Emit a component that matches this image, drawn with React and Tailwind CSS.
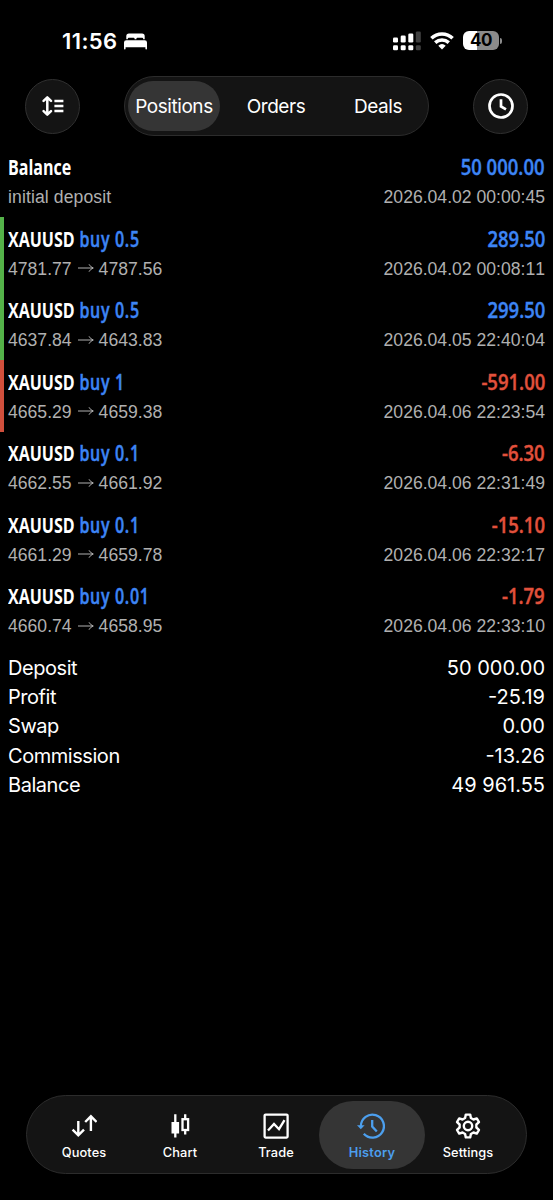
import React from 'react';

const transactions = [
  { id: 1, title: 'Balance', note: 'initial deposit', amount: '50 000.00', time: '2026.04.02 00:00:45' },
  { id: 2, title: 'XAUUSD', side: 'buy 0.5', from: '4781.77', to: '4787.56', amount: '289.50', time: '2026.04.02 00:08:11', bar: 'bg-[#54b249]' },
  { id: 3, title: 'XAUUSD', side: 'buy 0.5', from: '4637.84', to: '4643.83', amount: '299.50', time: '2026.04.05 22:40:04', bar: 'bg-[#54b249]' },
  { id: 4, title: 'XAUUSD', side: 'buy 1', from: '4665.29', to: '4659.38', amount: '-591.00', time: '2026.04.06 22:23:54', bar: 'bg-[#d04f3c]' },
  { id: 5, title: 'XAUUSD', side: 'buy 0.1', from: '4662.55', to: '4661.92', amount: '-6.30', time: '2026.04.06 22:31:49' },
  { id: 6, title: 'XAUUSD', side: 'buy 0.1', from: '4661.29', to: '4659.78', amount: '-15.10', time: '2026.04.06 22:32:17' },
  { id: 7, title: 'XAUUSD', side: 'buy 0.01', from: '4660.74', to: '4658.95', amount: '-1.79', time: '2026.04.06 22:33:10' },
];

const summary = [
  { label: 'Deposit', value: '50 000.00' },
  { label: 'Profit', value: '-25.19' },
  { label: 'Swap', value: '0.00' },
  { label: 'Commission', value: '-13.26' },
  { label: 'Balance', value: '49 961.55' },
];

const BedIcon = () => (
  <svg className="h-[17px] w-[23px]" viewBox="0 0 23 17" fill="currentColor">
    <path d="M2.3 6.2V3.2Q2.3 .5 5 .5h13q2.700 0 2.700 2.700v3h-1.500V5.800q0-1-1-1h-4.800q-1 0-1 1v.4h-1.800v-.4q0-1-1-1H4.800q-1 0-1 1v.4z" />
    <path d="M0 9.500Q0 7.200 2.300 7.200h18.400q2.300 0 2.300 2.300V15.600q0 .9-.8.900t-.8-.9V14.200H1.600v1.400q0 .9-.8.900T0 15.600z" />
  </svg>
);

const SignalIcon = () => (
  <svg className="h-[20px] w-[28px]" viewBox="0 0 28 20" fill="currentColor">
    <rect x="0" y="6.500" width="5" height="5" rx="1.300" />
    <rect x="7.700" y="4.500" width="5" height="7" rx="1.300" />
    <rect x="15.300" y="2.500" width="5" height="9" rx="1.300" />
    <rect x="22.800" y=".5" width="5" height="11" rx="1.300" opacity=".25" />
    <rect x="0" y="14.300" width="5" height="5" rx="1.300" />
    <rect x="7.700" y="14.300" width="5" height="5" rx="1.300" />
    <rect x="15.300" y="14.300" width="5" height="5" rx="1.300" />
    <rect x="22.800" y="14.300" width="5" height="5" rx="1.300" opacity=".25" />
  </svg>
);

const WifiIcon = () => (
  <svg className="h-[18px] w-[24px]" viewBox="0 0 24 18" fill="none" stroke="currentColor" strokeWidth="3.500">
    <path d="M1.400 6.300Q5.800 1.900 12 1.900T22.600 6.300" />
    <path d="M5.200 10.600Q8.200 7.900 12 7.900t6.800 2.700" />
    <path d="M8.300 13.700Q10 12.100 12 12.100t3.700 1.600L12 17.500z" fill="currentColor" stroke="none" />
  </svg>
);

const SortIcon = () => (
  <svg className="h-[20px] w-[22px]" viewBox="0 0 22 20" fill="none" stroke="currentColor" strokeWidth="2.500" strokeLinecap="round" strokeLinejoin="round">
    <path d="M5.300 2v16M1.600 4.900l3.700-3.500L9 4.900M1.600 15.100l3.700 3.500L9 15.100" />
    <path d="M12.400 4.900h9M12.400 10h9M12.400 15.100h9" strokeLinecap="butt" />
  </svg>
);

const ClockIcon = () => (
  <svg className="h-[26px] w-[26px]" viewBox="0 0 26 26" fill="none" stroke="currentColor" strokeWidth="2.700">
    <circle cx="13" cy="13" r="11.500" />
    <path d="M13 6.200V13.400L18 16.300" />
  </svg>
);

const QuotesIcon = () => (
  <svg className="h-[26px] w-[26px]" viewBox="0 0 26 26" fill="none" stroke="currentColor" strokeWidth="2.400">
    <path d="M7.300 8v14.500M1.600 16.700l5.700 5.700 5.700-5.700" />
    <path d="M19.900 18V3M14.200 9l5.700-5.700L25.600 9" />
  </svg>
);

const ChartIcon = () => (
  <svg className="h-[26px] w-[26px]" viewBox="0 0 26 26" fill="none" stroke="currentColor" strokeWidth="2.300">
    <path d="M8.300 1.200v23.200M18.200 1.200V6M18.200 17v4.500" />
    <rect x="4.500" y="9" width="7.600" height="11.500" fill="currentColor" stroke="none" />
    <rect x="15.500" y="6.200" width="5.600" height="10.800" />
  </svg>
);

const TradeIcon = () => (
  <svg className="h-[26px] w-[26px]" viewBox="0 0 26 26" fill="none" stroke="currentColor" strokeWidth="2.300">
    <rect x="1.600" y="1.600" width="23" height="23" rx="1" />
    <path d="M5 17.500l6-6.500 5 5.200 5.500-9" />
  </svg>
);

const HistoryIcon = () => (
  <svg className="ml-[-2px] h-[26px] w-[28px]" viewBox="0 0 28 26" fill="none" stroke="currentColor" strokeWidth="2.300">
    <path d="M3.900 13A11.500 11.500 0 1 1 6.800 20.800" />
    <path d="M15.200 7v6.500l4.600 5" />
    <path d="M0 12.200h7.600l-3.800 4z" fill="currentColor" stroke="none" />
  </svg>
);

// Outline of a six-tooth gear around (13, 13)
const gearPoints = [0, 60, 120, 180, 240, 300]
  .flatMap((deg) => {
    const a = (deg * Math.PI) / 180;
    return [[-2.9, -8], [-2.2, -11.4], [2.2, -11.4], [2.9, -8]].map(
      ([x, y]) => `${13 + x * Math.cos(a) - y * Math.sin(a)},${13 + x * Math.sin(a) + y * Math.cos(a)}`
    );
  })
  .join(' ');

const SettingsIcon = () => (
  <svg className="h-[26px] w-[26px]" viewBox="0 0 26 26" fill="none" stroke="currentColor" strokeWidth="2.400" strokeLinejoin="round">
    <polygon points={gearPoints} />
    <circle cx="13" cy="13" r="4.200" />
  </svg>
);

const tabs = [
  { label: 'Quotes', icon: QuotesIcon },
  { label: 'Chart', icon: ChartIcon },
  { label: 'Trade', icon: TradeIcon },
  { label: 'History', icon: HistoryIcon, active: true },
  { label: 'Settings', icon: SettingsIcon },
];

const StatusBar = () => (
  <div className="flex h-[76px] items-start justify-between pl-[62px] pr-[51px] pt-[30px]">
    <div className="-mt-px flex items-center gap-[6px]">
      <span className="w-[56px] whitespace-nowrap text-[22px] font-semibold leading-[24px] tracking-[0.4px]">11:56</span>
      <BedIcon />
    </div>
    <div className="flex items-center gap-[9px] pt-[0.5px]">
      <SignalIcon />
      <WifiIcon />
      <div className="flex items-center gap-px">
        <div className="flex h-[19px] w-[36px] items-center justify-center rounded-[6px] bg-linear-to-r from-white from-40% to-[#8b8b8b] to-40% text-[17px] font-bold leading-none tracking-[-0.5px] text-black">
          40
        </div>
        <div className="h-[6px] w-[2px] rounded-r-full bg-[#8b8b8b]" />
      </div>
    </div>
  </div>
);

const Header = () => (
  <div className="flex h-[60px] items-center justify-between px-[25px]">
    <button className="flex h-[55px] w-[55px] items-center justify-center rounded-full border border-[#303030] bg-[#141414]">
      <SortIcon />
    </button>
    <div className="flex h-[60px] w-[305px] items-center rounded-full border border-[#2c2c2c] bg-[#141414] pl-[3px] text-[19px] tracking-[-0.45px]">
      <button className="flex h-[50px] w-[92px] items-center justify-center rounded-full bg-[#353535] pt-[2px]">Positions</button>
      <button className="w-[112px] pt-[2px] text-center">Orders</button>
      <button className="w-[92px] pt-[2px] text-center">Deals</button>
    </div>
    <button className="flex h-[55px] w-[55px] items-center justify-center rounded-full border border-[#303030] bg-[#141414]">
      <ClockIcon />
    </button>
  </div>
);

const condensed = 'font-["Open_Sans",sans-serif] text-[21.5px] leading-[28px] whitespace-pre';

const TransactionRow = ({ item }) => (
  <div className="flex h-[71.5px]">
    <div className={`w-[4px] shrink-0 ${item.bar || ''}`} />
    <div className="flex flex-1 flex-col pl-[4px] pr-[8px] pt-[7.5px]">
      <div className={`flex justify-between ${condensed}`}>
        <div className="origin-left scale-x-[0.745] font-bold">
          {item.title}
          {item.side && (
            <span className="font-semibold tracking-[0.9px] text-[#3d85f5] [-webkit-text-stroke:0.5px]"> {item.side}</span>
          )}
        </div>
        <div
          className={`origin-right scale-x-[0.86] font-semibold [-webkit-text-stroke:0.4px] ${
            item.amount.startsWith('-') ? 'text-[#e2513c]' : 'text-[#3d85f5]'
          }`}
        >
          {item.amount}
        </div>
      </div>
      <div className='flex justify-between pt-[1px] font-["Liberation_Sans",sans-serif] text-[17.6px] leading-[30px] text-[#b0b0b0] [font-kerning:none]'>
        {item.note ? (
          <span className="tracking-[0.1px]">{item.note}</span>
        ) : (
          <span className="flex items-center">
            {item.from}
            <svg className="ml-[6px] mr-[5px] h-[9px] w-[16px]" viewBox="0 0 16 9" fill="none" stroke="currentColor">
              <path d="M0 4h15M11 .3q1.500 2.800 4.300 3.700Q12.500 4.900 11 7.700" />
            </svg>
            {item.to}
          </span>
        )}
        <span>{item.time}</span>
      </div>
    </div>
  </div>
);

const TabBar = () => (
  <nav className="mx-auto mt-auto mb-[26px] flex h-[79px] w-[501px] items-center rounded-full border border-[#2c2c2c] bg-[#141414] pl-[4px]">
    {tabs.map((tab) => (
      <button
        key={tab.label}
        className={`-mr-[10px] flex h-[68px] w-[106px] flex-col items-center rounded-full pt-[12px] text-[12.8px] ${
          tab.active ? 'bg-[#353535] font-semibold tracking-[0.2px] text-[#4c9fee]' : 'font-medium tracking-[0.1px]'
        }`}
      >
        <tab.icon />
        <span className="mt-[5px] leading-[18px]">{tab.label}</span>
      </button>
    ))}
  </nav>
);

const App = () => {
  return (
    <div className='flex h-[1200px] w-[553px] flex-col overflow-hidden bg-black font-["Inter",sans-serif] text-white'>
      <StatusBar />
      <Header />
      <main className="pt-[9.500px]">
        {transactions.map((item) => (
          <TransactionRow key={item.id} item={item} />
        ))}
        <div className="pl-[8px] pr-[8px] pt-[7px] text-[20px]">
          {summary.map((row) => (
            <div key={row.label} className="flex h-[29.3px] items-center justify-between">
              <span className="tracking-[-0.45px]">{row.label}</span>
              <span>{row.value}</span>
            </div>
          ))}
        </div>
      </main>
      <TabBar />
    </div>
  );
};

export default App;
